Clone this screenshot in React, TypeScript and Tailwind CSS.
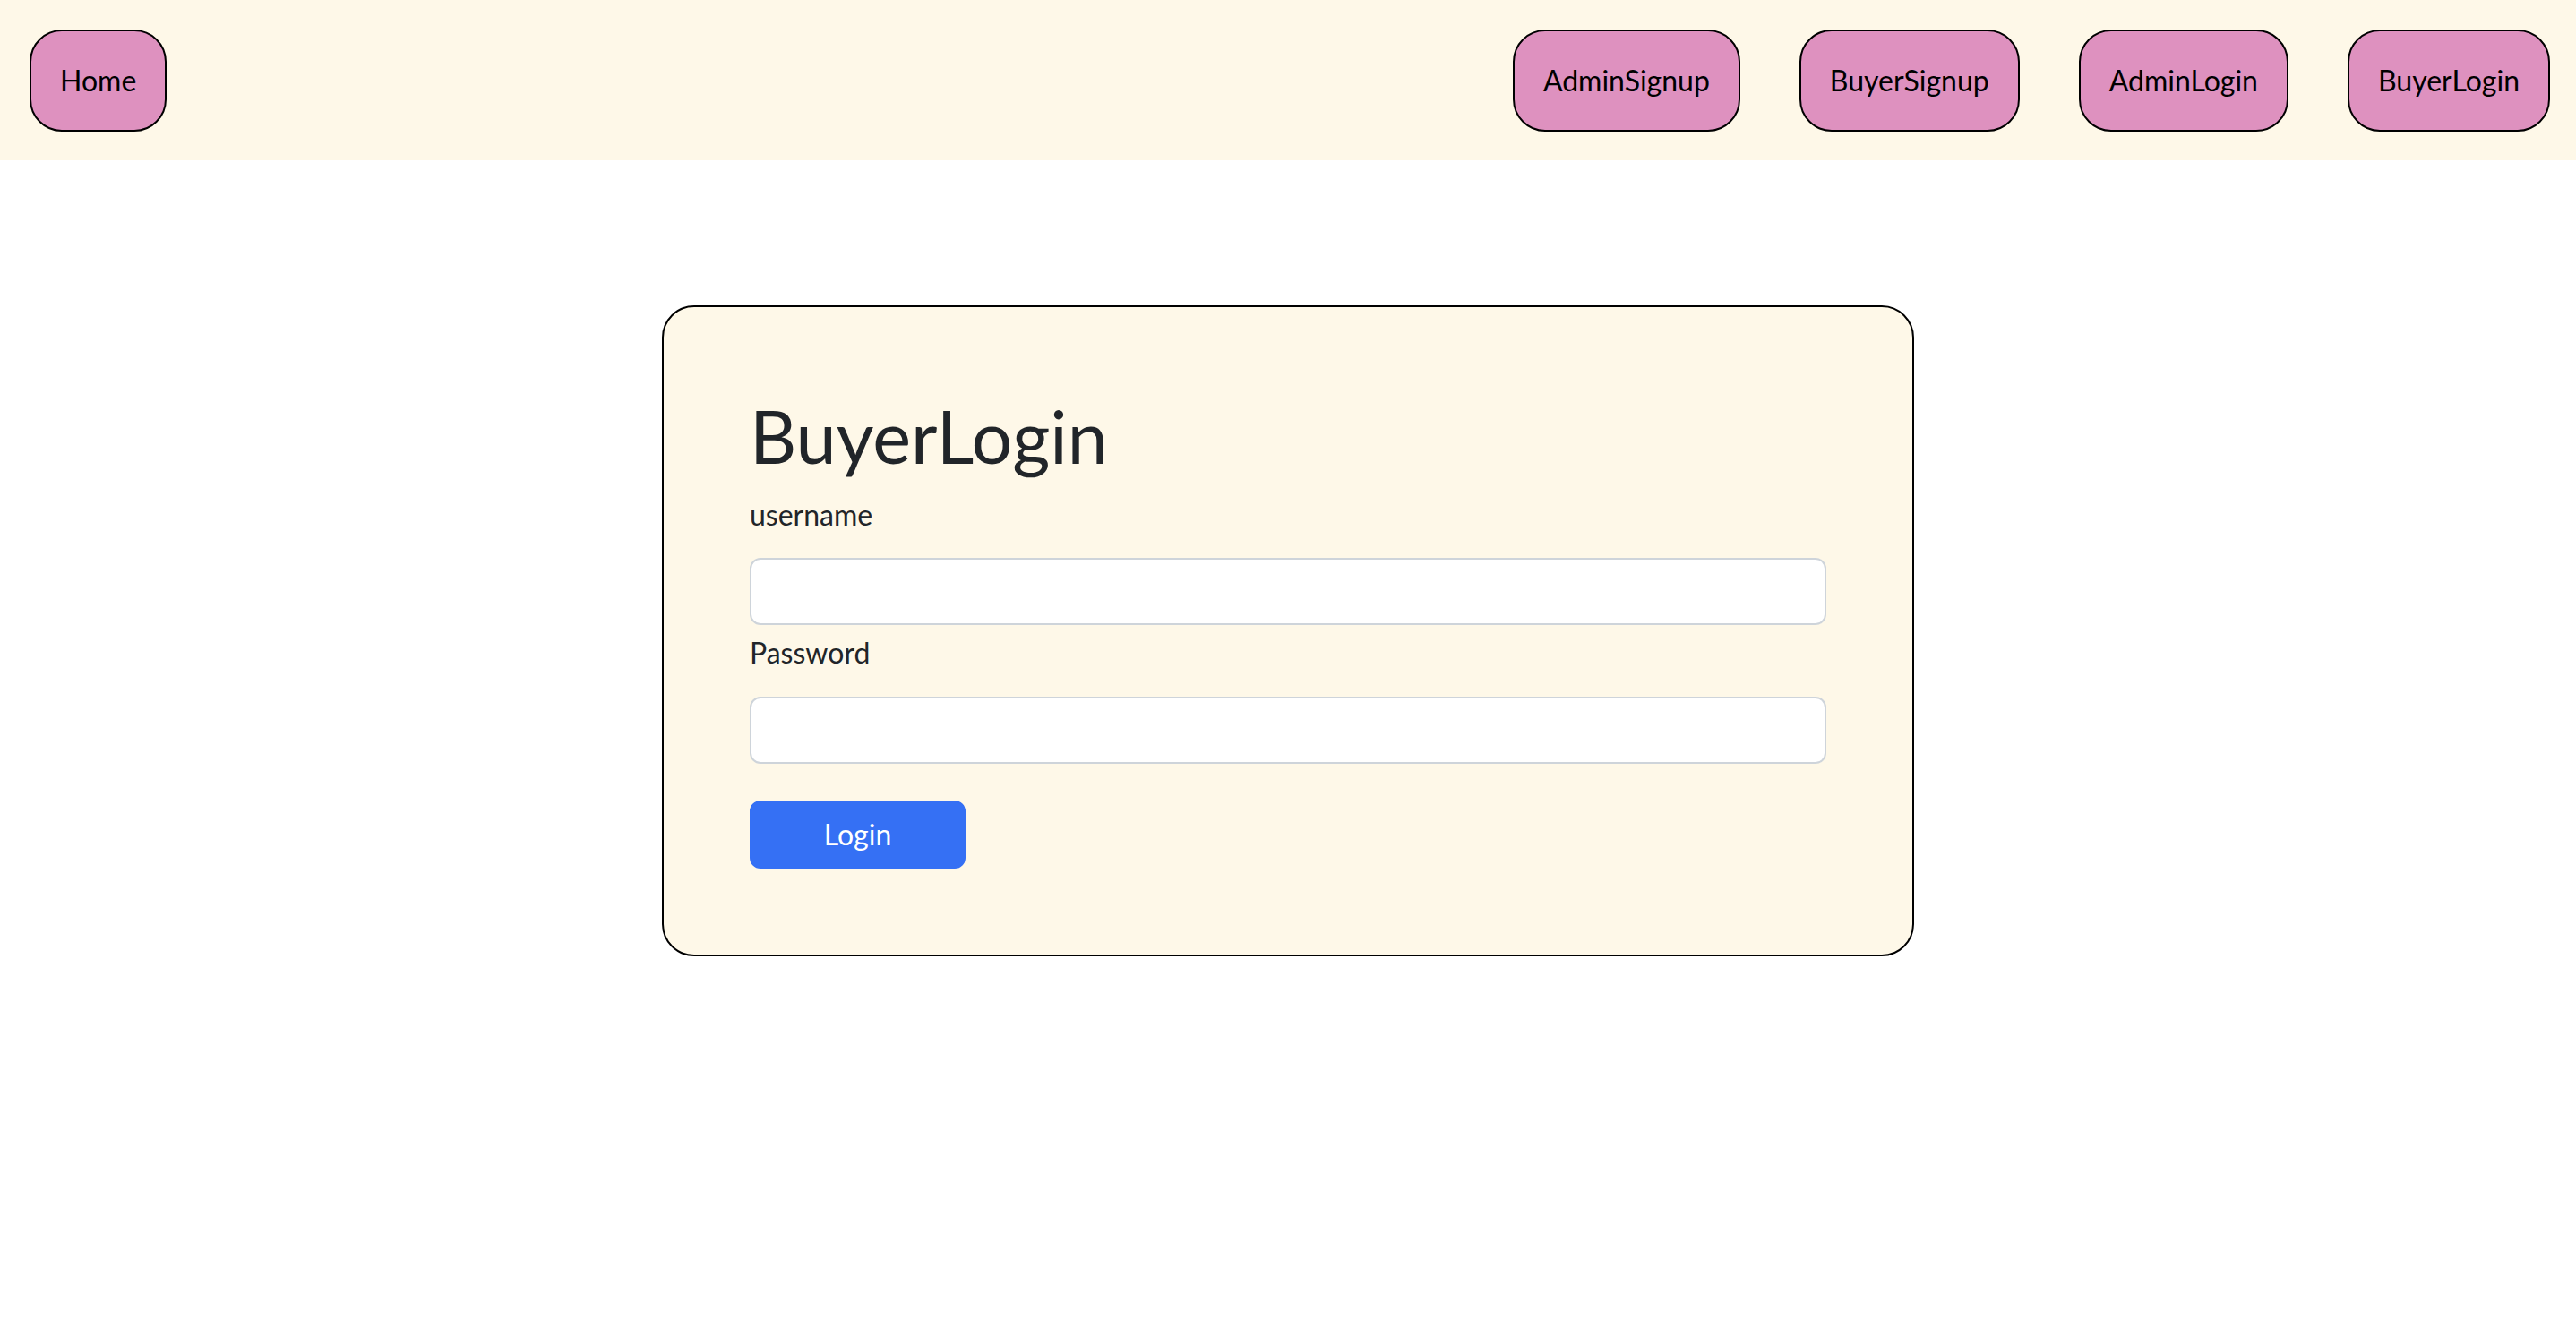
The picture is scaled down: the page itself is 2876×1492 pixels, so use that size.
const navLinks = ['AdminSignup', 'BuyerSignup', 'AdminLogin', 'BuyerLogin'];

function NavButton({ label }: { label: string }) {
  return (
    <button className="px-8 py-[31px] text-[32px] leading-[48px] text-black bg-[#de91bf] border-2 border-black rounded-[36px]">
      {label}
    </button>
  );
}

export default function App() {
  return (
    <div className="min-h-screen bg-white font-['Lato','Liberation_Sans',sans-serif] text-[#212529]">
      <nav className="h-[179px] flex items-center justify-between pl-[33px] pr-[29px] bg-[#fef8e8]">
        <NavButton label="Home" />
        <div className="flex items-center gap-[66px]">
          {navLinks.map((l) => (
            <NavButton key={l} label={l} />
          ))}
        </div>
      </nav>

      <main className="pt-[162px]">
        <div className="mx-auto w-[1398px] p-[96px] bg-[#fef8e8] border-2 border-black rounded-[36px]">
          <h1 className="text-[81px] leading-[96px] font-normal mb-4">BuyerLogin</h1>
          <label className="block text-[32px] leading-[48px] mb-[24px]">username</label>
          <input
            type="text"
            className="block w-full h-[75px] px-6 text-[32px] bg-white border-2 border-[#ced4da] rounded-[12px] outline-none"
          />
          <label className="block text-[32px] leading-[48px] mt-[7px] mb-[25px]">Password</label>
          <input
            type="password"
            className="block w-full h-[75px] px-6 text-[32px] bg-white border-2 border-[#ced4da] rounded-[12px] outline-none"
          />
          <button className="mt-[41px] w-[241px] h-[76px] text-[32px] leading-[48px] text-white bg-[#3570f4] border-2 border-[#3570f4] rounded-[12px]">
            Login
          </button>
        </div>
      </main>
    </div>
  );
}
